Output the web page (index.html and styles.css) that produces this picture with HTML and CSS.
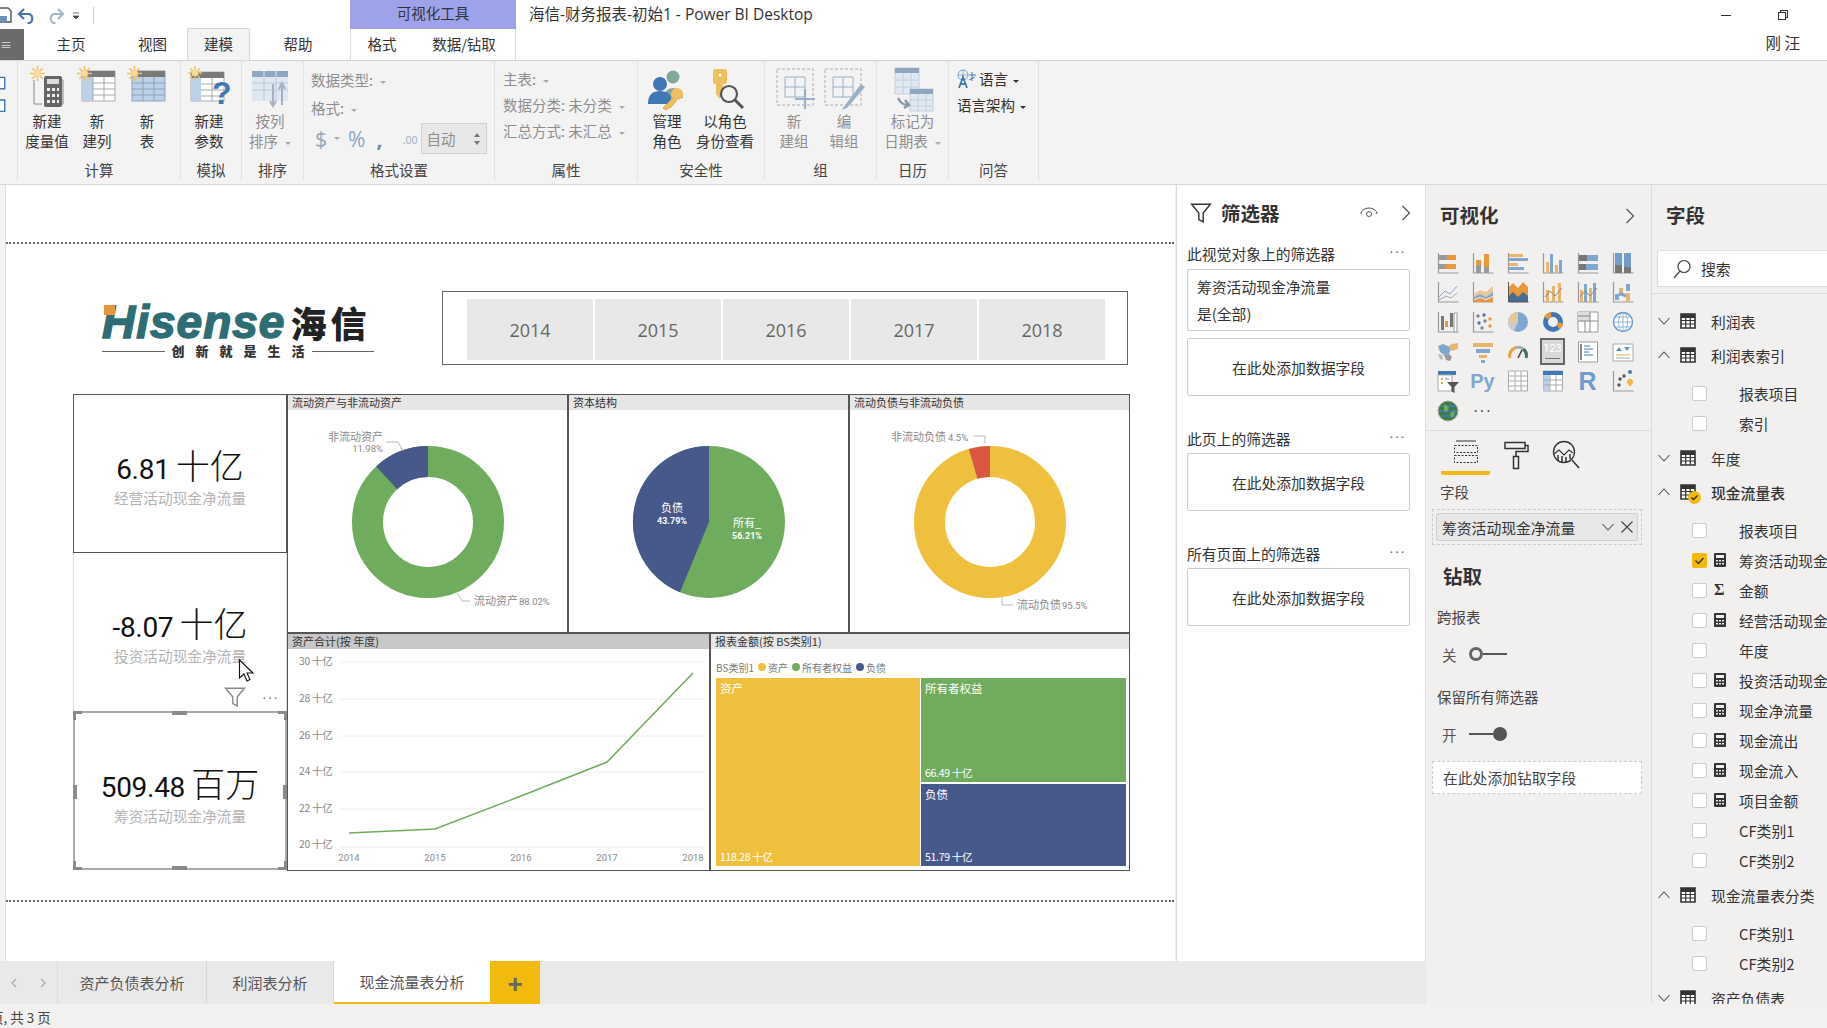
FILE: index.html
```html
<!DOCTYPE html>
<html lang="zh-CN">
<head>
    <meta charset="UTF-8">
    <meta name="viewport" content="width=device-width, initial-scale=1.0">
    <title>海信-财务报表-初始1 - Power BI Desktop</title>
    <link rel="stylesheet" href="styles.css">
</head>
<body>
    <svg class="defs" width="0" height="0">
        <symbol id="sun" viewBox="0 0 16 16">
            <g stroke="#f0c060" stroke-width="1.6">
                <path d="M8 0v16M0 8h16M2.5 2.5l11 11M13.5 2.5l-11 11"/>
            </g>
            <circle cx="8" cy="8" r="3.5" fill="#f7dca0"/>
        </symbol>
        <symbol id="tbl" viewBox="0 0 16 16">
            <path d="M1 1h14v14H1z" fill="#fff" stroke="#333" stroke-width="1.6"/>
            <path d="M1 1h14v4H1z" fill="#333"/>
            <path d="M1 7.5h14M1 11h14M5.7 4v11M10.3 4v11" stroke="#333" stroke-width="1.2"/>
        </symbol>
        <symbol id="calc" viewBox="0 0 12 14">
            <rect width="12" height="14" rx="1" fill="#333"/>
            <rect x="2" y="2" width="8" height="3" fill="#eee"/>
            <path d="M2 7h2v1.5H2zM5 7h2v1.5H5zM8 7h2v1.5H8zM2 10h2v1.5H2zM5 10h2v1.5H5zM8 10h2v1.5H8z" fill="#eee"/>
        </symbol>
        <symbol id="axis" viewBox="0 0 22 24">
            <path d="M1.5 2v20h20" fill="none" stroke="#9a9a9a" stroke-width="1.2"/>
        </symbol>
        <symbol id="chev-down" viewBox="0 0 14 14">
            <path d="M1.5 4l5.5 6 5.5-6" fill="none" stroke="#555" stroke-width="1.1"/>
        </symbol>
        <symbol id="chev-up" viewBox="0 0 14 14">
            <path d="M1.5 10l5.5-6 5.5 6" fill="none" stroke="#555" stroke-width="1.1"/>
        </symbol>
        <symbol id="funnel" viewBox="0 0 20 20">
            <path d="M1.5 2h17l-6.5 8v8l-4-2v-6z" fill="none" stroke="currentColor" stroke-width="1.3"/>
        </symbol>
    </svg>

    <div class="titlebar">
        <div class="qat">
            <svg class="qat-icon" width="94" height="20" viewBox="0 0 94 20">
                <path d="M-4 3h12l3 3v11H-4z" fill="#fff" stroke="#555" stroke-width="1.4"/>
                <path d="M-1 11h8v6h-8z" fill="#6a8fb8"/>
                <path d="M24 4l-5 5 5 5M19.5 9h10a5 5 0 0 1 0 9h-2" fill="none" stroke="#4a78ad" stroke-width="2.2"/>
                <path d="M58 4l5 5-5 5M62.5 9h-9a5 5 0 0 0 0 9h2" fill="none" stroke="#a8b8cc" stroke-width="2.2"/>
                <path d="M73 8h6M73 11h6l-3 3z" fill="#444" stroke="#444" stroke-width=".8"/>
                <path d="M93.5 2v17" stroke="#ccc"/>
            </svg>
        </div>
        <div class="tools-head">可视化工具</div>
        <div class="doc-title">海信-财务报表-初始1 - Power BI Desktop</div>
        <div class="win-controls">
            <svg width="12" height="12" viewBox="0 0 12 12"><path d="M1 6.5h10" stroke="#333"/></svg>
            <svg width="12" height="12" viewBox="0 0 12 12"><path d="M1.5 3.5h7v7h-7zM3.5 3.5v-2h7v7h-2" fill="none" stroke="#333" stroke-width="1.1"/></svg>
        </div>
    </div>

    <div class="tabs-row">
        <div class="file-tab">≡</div>
        <div class="rtab rtab-home">主页</div>
        <div class="rtab rtab-view">视图</div>
        <div class="rtab rtab-model active">建模</div>
        <div class="rtab rtab-help">帮助</div>
        <div class="tools-tabs">
            <div class="rtab rtab-format">格式</div>
            <div class="rtab rtab-data">数据/钻取</div>
        </div>
        <div class="user-name">刚 汪</div>
    </div>

    <div class="ribbon">
        <div class="rgroup g-clip">
            <div class="rgroup-body">
                <svg width="18" height="70" viewBox="0 0 18 70"><path d="M-6 10H5v12H-6zM-6 34H5v12H-6z" fill="#fff" stroke="#3f78b4" stroke-width="1.5"/></svg>
            </div>
        </div>
        <div class="rgroup g-calc">
            <div class="rgroup-body">
                <div class="rbtn w-58">
                    <svg width="40" height="46" viewBox="0 0 40 46">
                        <use href="#sun" x="3" y="0" width="15" height="15"/>
                        <path d="M7 14v24h8M30 14h6v24h-4" fill="none" stroke="#888"/>
                        <rect x="17" y="10" width="18" height="31" rx="2" fill="#666"/>
                        <rect x="20" y="13" width="12" height="5" fill="#ddd"/>
                        <path d="M20 22h3v3h-3zM25 22h3v3h-3zM30 22h2v3h-2zM20 28h3v3h-3zM25 28h3v3h-3zM30 28h2v3h-2zM20 34h3v3h-3zM25 34h3v3h-3zM30 34h2v3h-2z" fill="#eee"/>
                    </svg>
                    <span>新建<br>度量值</span>
                </div>
                <div class="rbtn w-42">
                    <svg width="40" height="46" viewBox="0 0 40 46">
                        <rect x="5" y="5" width="33" height="30" fill="#fff" stroke="#aaa"/>
                        <rect x="5" y="5" width="33" height="6" fill="#7a7a7a"/>
                        <rect x="5" y="11" width="11" height="24" fill="#bcd0e6"/>
                        <path d="M16 17h22M16 23h22M16 29h22M16 11v24M27 11v24" stroke="#aaa"/>
                        <use href="#sun" x="0" y="0" width="15" height="15"/>
                    </svg>
                    <span>新<br>建列</span>
                </div>
                <div class="rbtn w-58">
                    <svg width="40" height="46" viewBox="0 0 40 46">
                        <rect x="5" y="5" width="33" height="30" fill="#bcd0e6" stroke="#8ea3ba"/>
                        <rect x="5" y="5" width="33" height="6" fill="#7a7a7a"/>
                        <path d="M5 17h33M5 23h33M5 29h33M16 11v24M27 11v24" stroke="#8ea3ba"/>
                        <use href="#sun" x="0" y="0" width="15" height="15"/>
                    </svg>
                    <span>新<br>表</span>
                </div>
            </div>
            <div class="rgroup-label">计算</div>
        </div>
        <div class="rgroup g-sim">
            <div class="rgroup-body">
                <div class="rbtn w-56">
                    <svg width="42" height="46" viewBox="0 0 42 46">
                        <rect x="3" y="6" width="33" height="29" fill="#fff" stroke="#aaa"/>
                        <rect x="3" y="6" width="33" height="6" fill="#7a7a7a"/>
                        <rect x="3" y="12" width="10" height="23" fill="#bcd0e6"/>
                        <path d="M13 18h23M13 24h23M13 30h23M24 12v23" stroke="#aaa"/>
                        <use href="#sun" x="0" y="0" width="14" height="14"/>
                        <text x="24" y="38" class="qmark">?</text>
                    </svg>
                    <span>新建<br>参数</span>
                </div>
            </div>
            <div class="rgroup-label">模拟</div>
        </div>
        <div class="rgroup g-sort">
            <div class="rgroup-body">
                <div class="rbtn w-56 dim">
                    <svg width="42" height="46" viewBox="0 0 42 46">
                        <rect x="3" y="5" width="36" height="30" fill="#dfe8f1"/>
                        <rect x="3" y="5" width="36" height="6" fill="#8fa7be"/>
                        <path d="M3 17h36M3 24h36M15 5v30M27 5v30" stroke="#c9d4df" stroke-width="1.5"/>
                        <path d="M24 18v21M21 35l3 5 3-5M33 39V18M30 23l3-6 3 6" fill="none" stroke="#a2b2c2" stroke-width="2"/>
                    </svg>
                    <span>按列<br>排序<i class="caret-dim"></i></span>
                </div>
            </div>
            <div class="rgroup-label">排序</div>
        </div>
        <div class="rgroup g-format">
            <div class="rgroup-body col-body">
                <div class="rline dim">数据类型:<i class="caret-dim"></i></div>
                <div class="rline dim">格式:<i class="caret-dim"></i></div>
                <div class="fmt-row">
                    <span class="fmt-sym fmt-dollar">$</span><i class="caret-dim"></i>
                    <span class="fmt-sym fmt-pct">%</span>
                    <span class="fmt-sym fmt-comma">,</span>
                    <span class="fmt-dec">.00</span>
                    <span class="fmt-box">自动<svg width="8" height="16" viewBox="0 0 8 16"><path d="M1 6l3-4 3 4zM1 10l3 4 3-4z" fill="#777"/></svg></span>
                </div>
            </div>
            <div class="rgroup-label">格式设置</div>
        </div>
        <div class="rgroup g-props">
            <div class="rgroup-body col-body short-rows">
                <div class="rline dim">主表:<i class="caret-dim"></i></div>
                <div class="rline dim">数据分类: 未分类<i class="caret-dim"></i></div>
                <div class="rline dim">汇总方式: 未汇总<i class="caret-dim"></i></div>
            </div>
            <div class="rgroup-label">属性</div>
        </div>
        <div class="rgroup g-sec">
            <div class="rgroup-body">
                <div class="rbtn w-58">
                    <svg width="44" height="46" viewBox="0 0 44 46">
                        <circle cx="28" cy="11" r="6.5" fill="#7fa99b"/>
                        <path d="M18 32a10 10 0 0 1 20 0z" fill="#7fa99b"/>
                        <circle cx="15" cy="18" r="7" fill="#3f78b4"/>
                        <path d="M3 38c0-10 5-13 12-13s12 3 12 13z" fill="#3f78b4"/>
                        <circle cx="32" cy="28" r="6" fill="#efc060"/>
                        <path d="M28 32l-10 10 3 2 3-2 2-1 6-7" fill="#efc060" stroke="#d9a845"/>
                    </svg>
                    <span>管理<br>角色</span>
                </div>
                <div class="rbtn w-58">
                    <svg width="44" height="46" viewBox="0 0 44 46">
                        <rect x="10" y="3" width="14" height="15" rx="2" fill="#efc060"/>
                        <path d="M13 18h7v10l-3.5 5-3.5-5z" fill="#efc060"/>
                        <circle cx="17" cy="9" r="1.5" fill="#fff"/>
                        <circle cx="26" cy="28" r="8" fill="#f3f3f3" stroke="#555" stroke-width="2.2"/>
                        <path d="M32 34l8 8" stroke="#555" stroke-width="3"/>
                    </svg>
                    <span>以角色<br>身份查看</span>
                </div>
            </div>
            <div class="rgroup-label">安全性</div>
        </div>
        <div class="rgroup g-grp">
            <div class="rgroup-body">
                <div class="rbtn w-58 dim">
                    <svg width="42" height="46" viewBox="0 0 42 46">
                        <rect x="4" y="3" width="36" height="36" fill="none" stroke="#aaa" stroke-dasharray="3 2"/>
                        <path d="M12 11h20v20H12zM22 11v20M12 21h20" fill="none" stroke="#9ab0c6"/>
                        <path d="M32 23v20M22 33h20" stroke="#9ab0c6" stroke-width="2.2"/>
                    </svg>
                    <span>新<br>建组</span>
                </div>
                <div class="rbtn w-42 dim">
                    <svg width="42" height="46" viewBox="0 0 42 46">
                        <rect x="2" y="3" width="36" height="36" fill="none" stroke="#aaa" stroke-dasharray="3 2"/>
                        <path d="M10 11h20v20H10zM20 11v20M10 21h20" fill="none" stroke="#9ab0c6"/>
                        <path d="M20 42l18-24 4 3-18 21-5 2z" fill="#9ab0c6"/>
                    </svg>
                    <span>编<br>辑组</span>
                </div>
            </div>
            <div class="rgroup-label">组</div>
        </div>
        <div class="rgroup g-cal">
            <div class="rgroup-body">
                <div class="rbtn w-72 dim">
                    <svg width="44" height="46" viewBox="0 0 44 46">
                        <rect x="4" y="2" width="24" height="26" fill="#e0e8f1" stroke="#c4d0dc"/>
                        <rect x="4" y="2" width="24" height="5" fill="#8fa7be"/>
                        <path d="M4 14h24M4 21h24M12 7v21M20 7v21" stroke="#c4d0dc"/>
                        <rect x="19" y="23" width="23" height="22" fill="#e0e8f1" stroke="#c4d0dc"/>
                        <rect x="19" y="23" width="23" height="5" fill="#8fa7be"/>
                        <path d="M19 34h23M19 40h23M27 28v17M35 28v17" stroke="#c4d0dc"/>
                        <path d="M7 32c3 6 6 7 10 7M14 34l4 5-5 3" fill="none" stroke="#8a99a8" stroke-width="2.5"/>
                    </svg>
                    <span>标记为<br>日期表<i class="caret-dim"></i></span>
                </div>
            </div>
            <div class="rgroup-label">日历</div>
        </div>
        <div class="rgroup g-qa">
            <div class="rgroup-body col-body short-rows">
                <div class="rline lang-line">
                    <svg width="20" height="20" viewBox="0 0 20 20">
                        <circle cx="6" cy="6" r="5" fill="none" stroke="#7a9ccc"/>
                        <path d="M1 6h10M6 1v10" stroke="#7a9ccc" stroke-width=".7"/>
                        <path d="M2 19L6 8l4 11M3.5 15h5" fill="none" stroke="#3f78b4" stroke-width="1.8"/>
                        <path d="M12 6h7M15 3v9M12 11l6-3" fill="none" stroke="#3f78b4"/>
                    </svg>
                    <span>语言<i class="caret"></i></span>
                </div>
                <div class="rline">语言架构<i class="caret"></i></div>
            </div>
            <div class="rgroup-label">问答</div>
        </div>
    </div>

    <div class="main">
        <div class="work">
            <div class="work-top">
                <div class="canvas-wrap">
                    <div class="canvas">
                        <div class="page-line page-line-top"></div>
                        <div class="page-line page-line-bottom"></div>

                        <div class="logo">
                            <div class="logo-top">
                                <i class="logo-dot"></i>
                                <span class="logo-en">Hisense</span>
                                <span class="logo-cn">海信</span>
                            </div>
                            <div class="logo-slogan"><i></i><span>创新就是生活</span><i></i></div>
                        </div>

                        <div class="slicer">
                            <div class="year">2014</div>
                            <div class="year">2015</div>
                            <div class="year">2016</div>
                            <div class="year">2017</div>
                            <div class="year">2018</div>
                        </div>

                        <div class="kpi kpi-1">
                            <div class="kpi-value"><span class="num">6.81</span> <span class="unit">十亿</span></div>
                            <div class="kpi-label">经营活动现金净流量</div>
                        </div>
                        <div class="kpi kpi-2">
                            <div class="kpi-value"><span class="num">-8.07</span> <span class="unit">十亿</span></div>
                            <div class="kpi-label">投资活动现金净流量</div>
                            <div class="kpi-tools">
                                <svg class="kpi-funnel" width="22" height="22"><use href="#funnel"/></svg>
                                <span class="dots">···</span>
                            </div>
                        </div>
                        <div class="kpi kpi-3">
                            <div class="kpi-value"><span class="num">509.48</span> <span class="unit">百万</span></div>
                            <div class="kpi-label">筹资活动现金净流量</div>
                            <i class="h h-tl"></i><i class="h h-tr"></i><i class="h h-bl"></i><i class="h h-br"></i>
                            <i class="h h-tm"></i><i class="h h-bm"></i><i class="h h-lm"></i><i class="h h-rm"></i>
                        </div>

                        <div class="vis vis-a">
                            <div class="vis-head">流动资产与非流动资产</div>
                            <svg class="vis-svg" width="279" height="221" viewBox="0 0 279 221">
                                <circle cx="140" cy="112" r="60.5" fill="none" stroke="#6fac5e" stroke-width="31"/>
                                <path d="M140 36A76 76 0 0 0 88.1 56.5L109.2 79.2A45 45 0 0 1 140 67z" fill="#47598b"/>
                                <path d="M98 32h12l5 9M169 183l5 8h8" class="leader"/>
                                <text x="95" y="31" class="lbl end">非流动资产</text>
                                <text x="95" y="42" class="lbl-num end">11.98%</text>
                                <text x="186" y="195" class="lbl">流动资产</text>
                                <text x="231" y="195" class="lbl-num">88.02%</text>
                            </svg>
                        </div>
                        <div class="vis vis-b">
                            <div class="vis-head">资本结构</div>
                            <svg class="vis-svg" width="279" height="221" viewBox="0 0 279 221">
                                <circle cx="140" cy="112" r="76" fill="#6fac5e"/>
                                <path d="M140 36A76 76 0 0 0 111 182.3L140 112z" fill="#47598b"/>
                                <text x="103" y="102" class="lbl-in">负债</text>
                                <text x="103" y="114" class="lbl-in num-in">43.79%</text>
                                <text x="178" y="117" class="lbl-in">所有_</text>
                                <text x="178" y="129" class="lbl-in num-in">56.21%</text>
                            </svg>
                        </div>
                        <div class="vis vis-c">
                            <div class="vis-head">流动负债与非流动负债</div>
                            <svg class="vis-svg" width="279" height="221" viewBox="0 0 279 221">
                                <circle cx="140" cy="112" r="60.5" fill="none" stroke="#efc03d" stroke-width="31"/>
                                <path d="M140 36A76 76 0 0 0 118.8 39L127.4 68.8A45 45 0 0 1 140 67z" fill="#d9583f"/>
                                <path d="M123 26h12v8M152 186v9h11" class="leader"/>
                                <text x="41" y="31" class="lbl">非流动负债</text>
                                <text x="98" y="31" class="lbl-num">4.5%</text>
                                <text x="167" y="199" class="lbl">流动负债</text>
                                <text x="212" y="199" class="lbl-num">95.5%</text>
                            </svg>
                        </div>
                        <div class="vis vis-d">
                            <div class="vis-head dark">资产合计(按 年度)</div>
                            <svg class="vis-svg" width="421" height="221" viewBox="0 0 421 221">
                                <path d="M52 13h364M52 50h364M52 87h364M52 123h364M52 160h364M52 198h364" stroke="#eee"/>
                                <text x="11" y="16" class="axis-y">30 十亿</text>
                                <text x="11" y="53" class="axis-y">28 十亿</text>
                                <text x="11" y="90" class="axis-y">26 十亿</text>
                                <text x="11" y="126" class="axis-y">24 十亿</text>
                                <text x="11" y="163" class="axis-y">22 十亿</text>
                                <text x="11" y="199" class="axis-y">20 十亿</text>
                                <polyline points="61,184 147,180 233,147 319,113 405,24" fill="none" stroke="#6fac5e" stroke-width="1.5"/>
                                <text x="61" y="212" class="axis-x">2014</text>
                                <text x="147" y="212" class="axis-x">2015</text>
                                <text x="233" y="212" class="axis-x">2016</text>
                                <text x="319" y="212" class="axis-x">2017</text>
                                <text x="405" y="212" class="axis-x">2018</text>
                            </svg>
                        </div>
                        <div class="vis vis-e">
                            <div class="vis-head">报表金额(按 BS类别1)</div>
                            <div class="legend">
                                <span>BS类别1</span>
                                <span class="leg"><i class="dot dot-y"></i>资产</span>
                                <span class="leg"><i class="dot dot-g"></i>所有者权益</span>
                                <span class="leg"><i class="dot dot-b"></i>负债</span>
                            </div>
                            <div class="treemap">
                                <div class="cell cell-y"><span>资产</span><span class="cell-num">118.28 十亿</span></div>
                                <div class="tree-right">
                                    <div class="cell cell-g"><span>所有者权益</span><span class="cell-num">66.49 十亿</span></div>
                                    <div class="cell cell-b"><span>负债</span><span class="cell-num">51.79 十亿</span></div>
                                </div>
                            </div>
                        </div>

                        <svg class="cursor" width="18" height="24" viewBox="0 0 18 24">
                            <path d="M1.5 1v18l4.5-4 3 7 3-1.5-3-6.5h6z" fill="#fff" stroke="#111" stroke-width="1.1"/>
                        </svg>
                    </div>
                </div>

                <div class="filter-pane">
                    <div class="filter-head">
                        <svg class="filter-funnel" width="22" height="22"><use href="#funnel"/></svg>
                        <span class="pane-title">筛选器</span>
                        <svg class="eye" width="18" height="14" viewBox="0 0 18 14">
                            <path d="M1 8a8 6 0 0 1 16 0" fill="none" stroke="#555"/>
                            <circle cx="9" cy="8" r="2.5" fill="none" stroke="#555"/>
                        </svg>
                        <svg class="pane-chev" width="10" height="16" viewBox="0 0 10 16"><path d="M1.5 1l7 7-7 7" fill="none" stroke="#555" stroke-width="1.2"/></svg>
                    </div>
                    <div class="filter-label first"><span>此视觉对象上的筛选器</span><b class="dots">···</b></div>
                    <div class="filter-card">
                        <div>筹资活动现金净流量</div>
                        <div>是(全部)</div>
                    </div>
                    <div class="filter-drop tall">在此处添加数据字段</div>
                    <div class="filter-label"><span>此页上的筛选器</span><b class="dots">···</b></div>
                    <div class="filter-drop">在此处添加数据字段</div>
                    <div class="filter-label"><span>所有页面上的筛选器</span><b class="dots">···</b></div>
                    <div class="filter-drop">在此处添加数据字段</div>
                </div>
            </div>

            <div class="sheet-tabs">
                <div class="sheet-nav">
                    <svg width="8" height="12" viewBox="0 0 8 12"><path d="M6 2L2 6l4 4" fill="none" stroke="#aaa" stroke-width="1.2"/></svg>
                    <svg width="8" height="12" viewBox="0 0 8 12"><path d="M2 2l4 4-4 4" fill="none" stroke="#aaa" stroke-width="1.2"/></svg>
                </div>
                <div class="sheet sheet-1">资产负债表分析</div>
                <div class="sheet sheet-2">利润表分析</div>
                <div class="sheet sheet-3 active">现金流量表分析</div>
                <div class="sheet-add">+</div>
            </div>
        </div>

        <div class="viz-pane">
            <div class="side-head">
                <span class="pane-title">可视化</span>
                <svg class="pane-chev" width="10" height="16" viewBox="0 0 10 16"><path d="M1.5 1l7 7-7 7" fill="none" stroke="#555" stroke-width="1.2"/></svg>
            </div>
            <div class="viz-grid">
                <!-- row 1 -->
                <svg class="vi" viewBox="0 0 22 24"><use href="#axis" width="22" height="24"/><path d="M2 4h8v5H2zM2 13h6v5H2z" fill="#999"/><path d="M10 4h9v5h-9zM8 13h11v5H8z" fill="#e8973a"/></svg>
                <svg class="vi" viewBox="0 0 22 24"><use href="#axis" width="22" height="24"/><path d="M4 14h5v8H4zM12 16h5v6h-5z" fill="#999"/><path d="M4 9h5v5H4zM12 3h5v13h-5z" fill="#e8973a"/></svg>
                <svg class="vi" viewBox="0 0 22 24"><use href="#axis" width="22" height="24"/><path d="M2 3h14v3H2zM2 12h9v3H2z" fill="#e8b56a"/><path d="M2 7h19v3H2zM2 16h15v3H2z" fill="#7fa7d1"/></svg>
                <svg class="vi" viewBox="0 0 22 24"><use href="#axis" width="22" height="24"/><path d="M4 11h3v11H4zM13 14h3v8h-3z" fill="#e8b56a"/><path d="M8 3h3v19H8zM17 9h3v13h-3z" fill="#7fa7d1"/></svg>
                <svg class="vi" viewBox="0 0 22 24"><use href="#axis" width="22" height="24"/><path d="M2 4h8v6H2zM2 13h7v6H2z" fill="#777"/><path d="M10 4h11v6H10zM9 13h12v6H9z" fill="#7fa7d1"/></svg>
                <svg class="vi" viewBox="0 0 22 24"><use href="#axis" width="22" height="24"/><path d="M3 14h7v8H3zM12 16h7v6h-7z" fill="#777"/><path d="M3 2h7v12H3zM12 2h7v14h-7z" fill="#6f9ccb"/></svg>
                <!-- row 2 -->
                <svg class="vi" viewBox="0 0 22 24"><use href="#axis" width="22" height="24"/><path d="M2 17l6-6 5 3 7-8" fill="none" stroke="#8aa8c8"/><path d="M2 20l7-4 5 2 6-5" fill="none" stroke="#aaa"/></svg>
                <svg class="vi" viewBox="0 0 22 24"><use href="#axis" width="22" height="24"/><path d="M2 14l6-4 6 2 7-6v6l-7 5-6-3-6 3z" fill="#e8c89a"/><path d="M2 17l6-3 6 3 7-5v4l-7 3-6-2-6 2z" fill="#8aa8c8"/><path d="M2 20l6-2 6 2 7-3v5H2z" fill="#e8973a"/></svg>
                <svg class="vi" viewBox="0 0 22 24"><path d="M1 22V8l5-5 5 5 5-6 5 5v15z" fill="#e8973a"/><path d="M1 17l5-5 5 5 5-5 5 4v6H1z" fill="#4a6c94"/><path d="M1.5 2v20h20" fill="none" stroke="#555"/></svg>
                <svg class="vi" viewBox="0 0 22 24"><use href="#axis" width="22" height="24"/><path d="M4 10h3v12H4zM10 6h3v16h-3zM16 3h3v19h-3z" fill="#e8b56a"/><path d="M3 17l5-6 5 5 7-8" fill="none" stroke="#888"/></svg>
                <svg class="vi" viewBox="0 0 22 24"><use href="#axis" width="22" height="24"/><path d="M3 10h3v12H3zM12 8h3v14h-3z" fill="#e8b56a"/><path d="M7 4h3v18H7zM16 3h3v19h-3z" fill="#7fa7d1"/><path d="M3 17l5-6 5 5 7-8" fill="none" stroke="#888"/></svg>
                <svg class="vi" viewBox="0 0 22 24"><use href="#axis" width="22" height="24"/><path d="M3 14h4v6H3zM14 4h4v7h-4z" fill="#7fa7d1"/><path d="M7 8h4v8H7zM14 13h4v8h-4z" fill="#e8b56a"/><path d="M7 13l7 3" stroke="#7fa7d1" stroke-width="3"/></svg>
                <!-- row 3 -->
                <svg class="vi" viewBox="0 0 22 24"><use href="#axis" width="22" height="24"/><path d="M4 6h3v14H4zM13 3h3v14h-3z" fill="#777"/><path d="M8 11h3v6H8z" fill="#e8973a"/><path d="M17 3h3v19h-3z" fill="#fff" stroke="#999"/></svg>
                <svg class="vi" viewBox="0 0 22 24"><use href="#axis" width="22" height="24"/><circle cx="6" cy="6" r="1.7" fill="#888"/><circle cx="12" cy="5" r="1.7" fill="#4a78ad"/><circle cx="18" cy="9" r="1.7" fill="#e8973a"/><circle cx="7" cy="13" r="1.7" fill="#4a78ad"/><circle cx="13" cy="11" r="1.7" fill="#888"/><circle cx="18" cy="16" r="1.7" fill="#e8973a"/><circle cx="10" cy="18" r="1.7" fill="#888"/></svg>
                <svg class="vi" viewBox="0 0 22 24"><circle cx="11" cy="12" r="10" fill="#7fa7d1"/><path d="M11 12V2A10 10 0 0 0 1 12z" fill="#e8c89a"/><path d="M11 12H1a10 10 0 0 0 6 9z" fill="#ccc"/></svg>
                <svg class="vi" viewBox="0 0 22 24"><circle cx="11" cy="12" r="7.5" fill="none" stroke="#3f78b4" stroke-width="5"/><path d="M4 8a8 8 0 0 1 5-3.5M16 17a8 8 0 0 0 3-4" fill="none" stroke="#e8973a" stroke-width="5"/></svg>
                <svg class="vi" viewBox="0 0 22 24"><path d="M1 2h20v20H1z" fill="#fff" stroke="#999"/><path d="M1 2h12v9H1z" fill="#ddd"/><path d="M13 2v20M1 11h20M1 6h12M8 11v11" stroke="#888" fill="none"/></svg>
                <svg class="vi" viewBox="0 0 22 24"><circle cx="11" cy="12" r="9.5" fill="#fff" stroke="#5f92c8" stroke-width="1.3"/><path d="M1.5 12h19M3 7h16M3 17h16M11 2.5v19" stroke="#7fa7d1" stroke-width=".8" fill="none"/><ellipse cx="11" cy="12" rx="4.5" ry="9.5" fill="none" stroke="#7fa7d1" stroke-width=".8"/></svg>
                <!-- row 4 -->
                <svg class="vi" viewBox="0 0 22 24"><path d="M1 6l5-2 5 2 3 3-2 5-5 1-4-3z" fill="#7fa7d1"/><path d="M7 15l5-1 3 3-2 4-4-1z" fill="#999"/><path d="M11 6l4-2 6-1v6l-6 2z" fill="#e8b56a"/><path d="M1 14l4 1 1 5-3-1z" fill="#bbb"/></svg>
                <svg class="vi" viewBox="0 0 22 24"><path d="M1 3h20v4H1z" fill="#e8b56a"/><path d="M4 9h14v4H4z" fill="#7fa7d1"/><path d="M7 15h8v3H7z" fill="#e8b56a"/><path d="M9 20h4v3H9z" fill="#7fa7d1"/></svg>
                <svg class="vi" viewBox="0 0 22 24"><path d="M3 18a8 8 0 0 1 5-10" fill="none" stroke="#e8a33d" stroke-width="3"/><path d="M8 8a8 8 0 0 1 8 1" fill="none" stroke="#aaa" stroke-width="3"/><path d="M16 9a8 8 0 0 1 3 9" fill="none" stroke="#3f6f6a" stroke-width="3"/><path d="M11 18l4-8" stroke="#444" stroke-width="1.5"/></svg>
                <div class="vi-card"><span>123</span><i></i></div>
                <svg class="vi" viewBox="0 0 22 24"><path d="M1.5 2h19v20h-19z" fill="#fff" stroke="#999"/><path d="M4 4v16" stroke="#888" stroke-width="2"/><path d="M7 6h6M7 9h9M7 12h5M7 15h9" stroke="#7fa7d1" stroke-width="1.5"/></svg>
                <svg class="vi" viewBox="0 0 22 24"><path d="M1 4h20v17H1z" fill="#fff" stroke="#aaa"/><path d="M4 11l3-4 3 4zM12 7h6l-3 4z" fill="#5f92c8"/><path d="M4 15h14" stroke="#e8a33d"/><path d="M4 18h14" stroke="#aaa"/></svg>
                <!-- row 5 -->
                <svg class="vi" viewBox="0 0 22 24"><path d="M1 2h18v4H1z" fill="#3f78b4"/><path d="M1 6h14v16H1z" fill="#fff" stroke="#aaa"/><path d="M4 9h2v2H4zM4 13h2v2H4z" fill="#e8a33d"/><path d="M8 10h4" stroke="#888"/><path d="M10 13h12l-4.5 5v6l-3-1.5V18z" fill="#555"/></svg>
                <div class="vi-text vi-py">Py</div>
                <svg class="vi" viewBox="0 0 22 24"><path d="M1.5 2h19v20h-19zM1.5 7h19M1.5 12h19M1.5 17h19M8 2v20M14 2v20" fill="#fff" stroke="#aaa"/></svg>
                <svg class="vi" viewBox="0 0 22 24"><path d="M1.5 2h19v20h-19z" fill="#fff" stroke="#aaa"/><path d="M1 2h20v4H1z" fill="#3f78b4"/><path d="M1.5 6h6v16h-6z" fill="#bcd0e6"/><path d="M1.5 11h19M1.5 16h19M8 6v16M14 6v16" stroke="#aaa"/></svg>
                <div class="vi-text vi-r">R</div>
                <svg class="vi" viewBox="0 0 22 24"><use href="#axis" width="22" height="24"/><circle cx="7" cy="16" r="1.7" fill="#555"/><circle cx="8" cy="10" r="1.7" fill="#555"/><circle cx="12" cy="7" r="1.7" fill="#555"/><circle cx="18" cy="3" r="2" fill="#4a78ad"/><path d="M16 15a3 3 0 1 1 4 0l-1 2h-2z" fill="#efb94a"/></svg>
                <!-- row 6 -->
                <svg class="vi" viewBox="0 0 22 24"><circle cx="11" cy="12" r="10" fill="#3f7d3f" stroke="#aaa"/><path d="M2 12h18M4 7h14M4 17h14" stroke="#3f78b4" stroke-width="2"/><path d="M7 5l5 3-2 5-3-1zM13 14l5-2-1 5-3 2z" fill="#6fac5e"/></svg>
                <div class="vi-more dots">···</div>
            </div>
            <div class="viz-tabs">
                <div class="viz-tab on">
                    <svg width="28" height="26" viewBox="0 0 28 26"><path d="M4 1h20" stroke="#333"/><path d="M2.5 5.5h23v7h-23zM2.5 15.5h23v7h-23z" fill="none" stroke="#333" stroke-dasharray="2 1.5"/></svg>
                </div>
                <div class="viz-tab">
                    <svg width="26" height="30" viewBox="0 0 26 30"><path d="M2 2.5h20v6H2z" fill="none" stroke="#333" stroke-width="1.5"/><path d="M22 5.5h3v6H13v5" fill="none" stroke="#333" stroke-width="1.5"/><path d="M10.5 16.5h5v12h-5z" fill="none" stroke="#333" stroke-width="1.5"/></svg>
                </div>
                <div class="viz-tab">
                    <svg width="28" height="30" viewBox="0 0 28 30"><circle cx="12" cy="12" r="10.5" fill="none" stroke="#333" stroke-width="1.3"/><path d="M2 14l5-4 5 5 5-5 4 3" fill="none" stroke="#333" stroke-width="1.1"/><path d="M6 20v-5M10 22v-6M14 22v-5M18 19v-5" stroke="#333" stroke-width="1.5"/><path d="M20 20l7 8" stroke="#333" stroke-width="1.5"/></svg>
                </div>
            </div>
            <div class="viz-body">
                <div class="viz-label well-label">字段</div>
                <div class="well">
                    <div class="well-pill">
                        <span>筹资活动现金净流量</span>
                        <svg width="14" height="14"><use href="#chev-down"/></svg>
                        <svg class="well-x" width="14" height="14" viewBox="0 0 14 14"><path d="M1.5 1.5l11 11M12.5 1.5l-11 11" stroke="#444" stroke-width="1.1"/></svg>
                    </div>
                </div>
                <div class="pane-title drill-title">钻取</div>
                <div class="viz-label cross-label">跨报表</div>
                <div class="toggle-row">
                    <span>关</span>
                    <i class="knob-off"></i><i class="toggle-line"></i>
                </div>
                <div class="viz-label keep-label">保留所有筛选器</div>
                <div class="toggle-row">
                    <span>开</span>
                    <i class="toggle-line"></i><i class="knob-on"></i>
                </div>
                <div class="drill-drop">在此处添加钻取字段</div>
            </div>
        </div>

        <div class="fields-pane">
            <div class="side-head fields-head"><span class="pane-title">字段</span></div>
            <div class="search">
                <svg width="22" height="22" viewBox="0 0 22 22"><circle cx="13" cy="8.5" r="6" fill="none" stroke="#444" stroke-width="1.2"/><path d="M9 13l-6 7" stroke="#444" stroke-width="1.3"/></svg>
                <span>搜索</span>
            </div>
            <div class="tree">
                <div class="t-row"><svg width="14" height="14"><use href="#chev-down"/></svg><svg class="t-icon" width="16" height="16"><use href="#tbl"/></svg><span>利润表</span></div>
                <div class="t-row"><svg width="14" height="14"><use href="#chev-up"/></svg><svg class="t-icon" width="16" height="16"><use href="#tbl"/></svg><span>利润表索引</span></div>
                <div class="t-fields">
                    <div class="f-row"><i class="cb"></i><i class="f-type"></i><span>报表项目</span></div>
                    <div class="f-row"><i class="cb"></i><i class="f-type"></i><span>索引</span></div>
                </div>
                <div class="t-row"><svg width="14" height="14"><use href="#chev-down"/></svg><svg class="t-icon" width="16" height="16"><use href="#tbl"/></svg><span>年度</span></div>
                <div class="t-row">
                    <svg width="14" height="14"><use href="#chev-up"/></svg>
                    <span class="t-badge">
                        <svg class="t-icon" width="16" height="16"><use href="#tbl"/></svg>
                        <svg class="badge" width="13" height="13" viewBox="0 0 13 13"><circle cx="6.5" cy="6.5" r="6.5" fill="#f2b90f"/><path d="M3.5 6.5l2 2 4-4" fill="none" stroke="#333" stroke-width="1.4"/></svg>
                    </span>
                    <span class="t-strong">现金流量表</span>
                </div>
                <div class="t-fields">
                    <div class="f-row"><i class="cb"></i><i class="f-type"></i><span>报表项目</span></div>
                    <div class="f-row"><svg class="cb-on" width="15" height="15" viewBox="0 0 15 15"><rect width="15" height="15" rx="2" fill="#f2b90f"/><path d="M3.5 7.5l3 3 5-5.5" fill="none" stroke="#333" stroke-width="1.3"/></svg><svg class="f-type" width="12" height="14"><use href="#calc"/></svg><span>筹资活动现金净流量</span></div>
                    <div class="f-row"><i class="cb"></i><span class="f-type f-sigma">Σ</span><span>金额</span></div>
                    <div class="f-row"><i class="cb"></i><svg class="f-type" width="12" height="14"><use href="#calc"/></svg><span>经营活动现金净流量</span></div>
                    <div class="f-row"><i class="cb"></i><i class="f-type"></i><span>年度</span></div>
                    <div class="f-row"><i class="cb"></i><svg class="f-type" width="12" height="14"><use href="#calc"/></svg><span>投资活动现金净流量</span></div>
                    <div class="f-row"><i class="cb"></i><svg class="f-type" width="12" height="14"><use href="#calc"/></svg><span>现金净流量</span></div>
                    <div class="f-row"><i class="cb"></i><svg class="f-type" width="12" height="14"><use href="#calc"/></svg><span>现金流出</span></div>
                    <div class="f-row"><i class="cb"></i><svg class="f-type" width="12" height="14"><use href="#calc"/></svg><span>现金流入</span></div>
                    <div class="f-row"><i class="cb"></i><svg class="f-type" width="12" height="14"><use href="#calc"/></svg><span>项目金额</span></div>
                    <div class="f-row"><i class="cb"></i><i class="f-type"></i><span>CF类别1</span></div>
                    <div class="f-row"><i class="cb"></i><i class="f-type"></i><span>CF类别2</span></div>
                </div>
                <div class="t-row"><svg width="14" height="14"><use href="#chev-up"/></svg><svg class="t-icon" width="16" height="16"><use href="#tbl"/></svg><span>现金流量表分类</span></div>
                <div class="t-fields">
                    <div class="f-row"><i class="cb"></i><i class="f-type"></i><span>CF类别1</span></div>
                    <div class="f-row"><i class="cb"></i><i class="f-type"></i><span>CF类别2</span></div>
                </div>
                <div class="t-row"><svg width="14" height="14"><use href="#chev-down"/></svg><svg class="t-icon" width="16" height="16"><use href="#tbl"/></svg><span>资产负债表</span></div>
            </div>
        </div>
    </div>

    <div class="statusbar">页, 共 3 页</div>
</body>
</html>
```

FILE: styles.css
```css
* {
    box-sizing: border-box;
}

html, body {
    margin: 0;
    padding: 0;
    height: 100%;
}

body {
    width: 1827px;
    height: 1028px;
    overflow: hidden;
    background-color: #fff;
    color: #333;
    font-family: "Noto Sans CJK SC", "Open Sans", sans-serif;
    font-size: 14.5px;
    display: flex;
    flex-direction: column;
}

i {
    font-style: normal;
}

.defs {
    position: absolute;
}

.dots {
    font-family: "Liberation Sans", sans-serif;
    letter-spacing: 1px;
}

/* title bar */
.titlebar {
    height: 29px;
    flex: none;
    display: flex;
    align-items: stretch;
}

.qat {
    width: 350px;
    display: flex;
    align-items: center;
}

.tools-head {
    width: 166px;
    background-color: #9ea2ea;
    color: #333;
    text-align: center;
    line-height: 26px;
}

.doc-title {
    padding-left: 13px;
    line-height: 29px;
    font-size: 15.5px;
    font-family: "Open Sans", "Noto Sans CJK SC", sans-serif;
}

.win-controls {
    margin-left: auto;
    width: 107px;
    padding-right: 38px;
    display: flex;
    justify-content: space-between;
    align-items: center;
}

.tabs-row {
    height: 32px;
    flex: none;
    display: flex;
    align-items: stretch;
    background-color: #fff;
    border-bottom: 1px solid #d8d8d8;
}

.file-tab {
    width: 24px;
    height: 31px;
    background-color: #6b6b6b;
    color: #ddd;
    font-size: 12px;
    line-height: 31px;
    text-align: left;
}

.rtab {
    text-align: center;
    line-height: 29px;
}

.rtab.active {
    background-color: #f3f3f3;
    border: 1px solid #d8d8d8;
    border-bottom: none;
    height: 32px;
    margin-top: -1px;
    line-height: 29px;
}

.rtab-home { width: 94px; }
.rtab-view { width: 69px; }
.rtab-model { width: 63px; }
.rtab-help { width: 96px; margin-right: 4px; }
.rtab-format { width: 62px; }
.rtab-data { width: 102px; }

.tools-tabs {
    display: flex;
    border-left: 1px solid #dcdcdc;
    border-right: 1px solid #dcdcdc;
}

.user-name {
    margin-left: auto;
    padding-right: 27px;
    line-height: 27px;
    font-size: 15.5px;
}

/* ribbon */
.ribbon {
    height: 124px;
    flex: none;
    display: flex;
    background-color: #f3f3f3;
    border-bottom: 1px solid #d8d8d8;
}

.rgroup {
    display: flex;
    flex-direction: column;
    padding-top: 5px;
    border-right: 1px solid #e3e3e3;
    margin-bottom: 3px;
}

.rgroup-body {
    height: 94px;
    display: flex;
    line-height: 20px;
}

.rgroup-label {
    text-align: center;
    line-height: 22px;
    color: #444;
}

.g-clip { width: 18px; }
.g-calc { width: 163px; }
.g-sim { width: 61px; }
.g-sort { width: 62px; }
.g-format { width: 191px; }
.g-props { width: 143px; }
.g-sec { width: 127px; }
.g-grp { width: 112px; }
.g-cal { width: 72px; }
.g-qa { width: 90px; }

.rbtn {
    display: flex;
    flex-direction: column;
    align-items: center;
    text-align: center;
}

.rbtn svg {
    margin-bottom: -1px;
    height: 46px;
    overflow: visible;
}

.rbtn span {
    white-space: nowrap;
}

.w-42 { width: 42px; }
.w-56 { width: 56px; }
.w-58 { width: 58px; }
.w-72 { width: 72px; }

.dim {
    color: #8e8e8e;
}

.qmark {
    font-family: "Liberation Sans", sans-serif;
    font-weight: bold;
    font-size: 32px;
    fill: #3f78b4;
}

.caret-dim {
    display: inline-block;
    width: 0;
    height: 0;
    margin-left: 7px;
    vertical-align: middle;
    border-left: 3px solid transparent;
    border-right: 3px solid transparent;
    border-top: 3px solid #aaa;
}

.caret {
    display: inline-block;
    width: 0;
    height: 0;
    margin-left: 5px;
    vertical-align: middle;
    border-left: 3px solid transparent;
    border-right: 3px solid transparent;
    border-top: 3px solid #333;
}

.col-body {
    flex-direction: column;
    padding: 1px 0 0 7px;
}

.rline {
    height: 28px;
    line-height: 26px;
    white-space: nowrap;
}

.short-rows {
    padding: 0 0 0 8px;
}

.short-rows .rline {
    height: 26px;
}

.fmt-row {
    display: flex;
    align-items: center;
    color: #8da6c0;
}

.fmt-sym {
    font-family: "Open Sans", sans-serif;
    font-size: 21px;
    line-height: 30px;
}

.fmt-dollar { margin-left: 4px; }
.fmt-pct { margin-left: 8px; }
.fmt-comma { margin-left: 11px; font-weight: bold; color: #6f8aa8; }

.fmt-dec {
    margin-left: 20px;
    font-size: 11px;
    width: 19px;
    color: #a0b2c4;
}

.fmt-box {
    width: 66px;
    height: 31px;
    padding: 0 5px 0 4px;
    display: flex;
    justify-content: space-between;
    align-items: center;
    background-color: #e8e8e8;
    border: 1px solid #d0d0d0;
    color: #8e8e8e;
}

.lang-line {
    display: flex;
    align-items: center;
    gap: 2px;
}

/* main area */
.main {
    flex: 1;
    display: flex;
    min-height: 0;
}

.work {
    width: 1426px;
    display: flex;
    flex-direction: column;
}

.work-top {
    flex: 1;
    display: flex;
    min-height: 0;
}

.canvas-wrap {
    width: 1176px;
    padding-left: 5px;
    background-color: #f3f3f3;
}

.canvas {
    position: relative;
    width: 1170px;
    height: 100%;
    background-color: #fff;
    border-left: 1px solid #dcdcdc;
}

.page-line {
    position: absolute;
    left: 0;
    width: 1168px;
    border-top: 2px dotted #666;
}

.page-line-top { top: 57px; }
.page-line-bottom { top: 715px; }

/* canvas items, page coordinates minus 6,185 */
.logo {
    position: absolute;
    left: 96px;
    top: 118px;
    width: 272px;
}

.logo-top {
    position: relative;
    height: 38px;
    display: flex;
    align-items: center;
}

.logo-dot {
    position: absolute;
    left: 2px;
    top: 2px;
    width: 11px;
    height: 10px;
    background-color: #e8963a;
}

.logo-en {
    font-family: "Liberation Sans", sans-serif;
    font-size: 46px;
    font-weight: bold;
    font-style: italic;
    color: #2f6d74;
    -webkit-text-stroke: 1.5px #2f6d74;
    letter-spacing: 1px;
    line-height: 38px;
}

.logo-cn {
    margin-left: 5px;
    font-size: 36px;
    font-weight: 900;
    letter-spacing: 4px;
    color: #222;
    line-height: 38px;
}

.logo-slogan {
    margin-top: 3px;
    display: flex;
    align-items: center;
    gap: 7px;
}

.logo-slogan i {
    flex: 1;
    border-top: 1px solid #666;
}

.logo-slogan span {
    font-size: 13px;
    font-weight: 900;
    letter-spacing: 11px;
    margin-right: -11px;
    line-height: 14px;
    color: #333;
}

.slicer {
    position: absolute;
    left: 436px;
    top: 106px;
    width: 686px;
    height: 74px;
    border: 1px solid #666;
    padding: 7px 22px 4px 24px;
    display: flex;
    gap: 2px;
}

.year {
    flex: 1;
    background-color: #e8e8e8;
    color: #666;
    font-family: "Open Sans", sans-serif;
    font-size: 18px;
    display: flex;
    justify-content: center;
    align-items: center;
}

.kpi {
    position: absolute;
    left: 67px;
    width: 214px;
    text-align: center;
    background-color: #fff;
}

.kpi-1 {
    top: 209px;
    height: 159px;
    padding-top: 46px;
    border: 1px solid #555;
}

.kpi-2 {
    top: 368px;
    height: 158px;
    padding-top: 46px;
    border-left: 1px solid #ddd;
    border-right: 1px solid #ddd;
}

.kpi-3 {
    top: 526px;
    height: 159px;
    padding-top: 46px;
    border: 2px solid #aaa;
}

.kpi-value {
    height: 47px;
    line-height: 47px;
    color: #111;
    white-space: nowrap;
}

.num {
    font-family: Roboto, sans-serif;
    font-size: 28px;
    letter-spacing: -.3px;
}

.unit {
    margin-left: 3px;
    font-size: 34px;
    font-weight: 300;
}

.kpi-label {
    font-size: 14.7px;
    line-height: 20px;
    color: #b4b4b4;
    white-space: nowrap;
}

.kpi-tools {
    position: absolute;
    right: 7px;
    bottom: 3px;
    display: flex;
    align-items: center;
    gap: 16px;
    color: #666;
    font-size: 14px;
}

.kpi-funnel {
    color: #888;
}

.h {
    position: absolute;
    background-color: #8a8a8a;
}

.h-tl, .h-tr, .h-bl, .h-br {
    width: 9px;
    height: 9px;
    background: none;
    border: 0 solid #8a8a8a;
}

.h-tl { left: -2px; top: -2px; border-width: 3px 0 0 3px; }
.h-tr { right: -2px; top: -2px; border-width: 3px 3px 0 0; }
.h-bl { left: -2px; bottom: -2px; border-width: 0 0 3px 3px; }
.h-br { right: -2px; bottom: -2px; border-width: 0 3px 3px 0; }

.h-tm { left: 97px; top: -2px; width: 15px; height: 4px; }
.h-bm { left: 97px; bottom: -2px; width: 15px; height: 4px; }
.h-lm { left: -2px; top: 72px; width: 4px; height: 14px; }
.h-rm { right: -2px; top: 72px; width: 4px; height: 14px; }

.vis {
    position: absolute;
    background-color: #fff;
    border: 1px solid #555;
}

.vis-a { left: 281px; top: 209px; width: 281px; height: 239px; }
.vis-b { left: 562px; top: 209px; width: 281px; height: 239px; }
.vis-c { left: 843px; top: 209px; width: 281px; height: 239px; }
.vis-d { left: 281px; top: 448px; width: 423px; height: 238px; }
.vis-e { left: 704px; top: 448px; width: 420px; height: 238px; }

.vis-head {
    height: 15px;
    padding-left: 4px;
    background-color: #e6e6e6;
    color: #333;
    font-size: 11px;
    line-height: 14px;
    white-space: nowrap;
}

.vis-head.dark {
    background-color: #c8c8c8;
}

.vis-svg {
    display: block;
}

.leader {
    fill: none;
    stroke: #bbb;
    stroke-width: 1;
}

.lbl {
    font-size: 11px;
    fill: #8a8a8a;
}

.lbl-num {
    font-family: Roboto, sans-serif;
    font-size: 9.5px;
    fill: #8a8a8a;
}

.end {
    text-anchor: end;
}

.lbl-in {
    font-size: 11px;
    fill: #fff;
    text-anchor: middle;
}

.num-in {
    font-family: Roboto, sans-serif;
    font-size: 9px;
    font-weight: bold;
}

.axis-y {
    font-size: 10.5px;
    fill: #8a8a8a;
    letter-spacing: -.3px;
}

.axis-x {
    font-family: Roboto, sans-serif;
    font-size: 9.5px;
    fill: #8a8a8a;
    text-anchor: middle;
}

.legend {
    height: 29px;
    padding: 7px 0 0 5px;
    display: flex;
    gap: 4px;
    align-items: center;
    font-size: 10px;
    color: #777;
    white-space: nowrap;
}

.leg {
    display: flex;
    align-items: center;
    gap: 1px;
}

.dot {
    width: 8px;
    height: 8px;
    border-radius: 50%;
    margin-right: 1px;
}

.dot-y { background-color: #efc03d; }
.dot-g { background-color: #6fac5e; }
.dot-b { background-color: #47598b; }

.treemap {
    height: 188px;
    margin: 0 3px 0 5px;
    display: flex;
    gap: 1px;
}

.cell {
    padding: 2px 4px 1px;
    display: flex;
    flex-direction: column;
    justify-content: space-between;
    color: #fff;
    font-size: 11.5px;
    line-height: 16px;
}

.cell-num {
    font-size: 10.5px;
    letter-spacing: -.3px;
}

.cell-y {
    width: 204px;
    background-color: #efc03d;
}

.tree-right {
    flex: 1;
    display: flex;
    flex-direction: column;
    gap: 2px;
}

.cell-g {
    height: 104px;
    background-color: #6fac5e;
}

.cell-b {
    flex: 1;
    background-color: #47598b;
}

.cursor {
    position: absolute;
    left: 232px;
    top: 474px;
}

/* filter pane */
.filter-pane {
    width: 250px;
    padding: 15px 15px 0 10px;
    background-color: #fff;
    border-left: 1px solid #dcdcdc;
    border-right: 1px solid #dcdcdc;
}

.filter-head {
    height: 25px;
    display: flex;
    align-items: center;
    margin-right: -1px;
}

.filter-funnel {
    margin: 0 9px 0 3px;
    color: #333;
}

.pane-title {
    font-size: 19.5px;
    font-weight: bold;
    line-height: 25px;
    color: #333;
}

.eye {
    margin-left: auto;
    margin-right: 23px;
}

.filter-label {
    height: 19px;
    margin-top: 33px;
    display: flex;
    justify-content: space-between;
    line-height: 19px;
    font-size: 14.8px;
    color: #333;
}

.filter-label.first {
    margin-top: 19px;
}

.filter-label b {
    font-weight: normal;
    font-size: 14px;
    color: #666;
    padding-right: 4px;
    line-height: 14px;
}

.filter-card {
    height: 62px;
    margin-top: 6px;
    padding: 3px 9px;
    background-color: #fff;
    border: 1px solid #ccc;
    border-radius: 2px;
    font-size: 14.8px;
    line-height: 27px;
}

.filter-drop {
    height: 58px;
    margin-top: 5px;
    background-color: #fff;
    border: 1px solid #ccc;
    border-radius: 2px;
    font-size: 14.8px;
    display: flex;
    justify-content: center;
    align-items: center;
}

.filter-drop.tall {
    margin-top: 7px;
}

/* sheet tabs */
.sheet-tabs {
    height: 43px;
    flex: none;
    display: flex;
    background-color: #e9e9e9;
}

.sheet-nav {
    width: 58px;
    padding: 0 10px;
    display: flex;
    justify-content: space-between;
    align-items: center;
    border-right: 1px solid #dcdcdc;
}

.sheet {
    display: flex;
    justify-content: center;
    align-items: center;
    color: #555;
    font-size: 15px;
    border-right: 1px solid #d8d8d8;
}

.sheet-1 { width: 149px; }
.sheet-2 { width: 127px; }
.sheet-3 { width: 156px; }

.sheet.active {
    background-color: #fff;
    border-right: none;
    border-bottom: 2px solid #f2b90f;
}

.sheet-add {
    width: 50px;
    background-color: #f2b90f;
    color: #666;
    font-family: "Liberation Sans", sans-serif;
    font-size: 26px;
    font-weight: bold;
    text-align: center;
    line-height: 46px;
}

/* visualisations pane */
.viz-pane {
    width: 226px;
    background-color: #f2f0ef;
    border-right: 1px solid #dcdcdc;
    display: flex;
    flex-direction: column;
}

.side-head {
    height: 63px;
    flex: none;
    padding: 17px 16px 0 14px;
    display: flex;
    justify-content: space-between;
    align-items: flex-start;
}

.side-head .pane-chev {
    margin-top: 6px;
}

.pane-chev {
    flex: none;
}

.viz-grid {
    height: 183px;
    flex: none;
    padding-left: 4px;
    display: grid;
    grid-template-columns: repeat(6, 35px);
    grid-auto-rows: 29.6px;
    align-items: center;
    justify-items: center;
    border-bottom: 1px solid #dcdcdc;
}

.vi {
    width: 22px;
    height: 24px;
}

.vi-card {
    width: 25px;
    height: 27px;
    background-color: #d9d9d9;
    border: 2px solid #666;
    color: #fff;
    font-family: Roboto, sans-serif;
    font-size: 11px;
    text-align: center;
    line-height: 17px;
    position: relative;
}

.vi-card i {
    position: absolute;
    left: 3px;
    right: 3px;
    bottom: 4px;
    border-top: 1px solid #777;
}

.vi-text {
    font-family: "Liberation Sans", sans-serif;
    font-size: 20px;
    font-weight: bold;
    color: #7fa7d1;
    line-height: 24px;
}

.vi-r {
    font-size: 25px;
    color: #6f9ccb;
}

.vi-more {
    font-size: 16px;
    color: #444;
}

.viz-tabs {
    height: 44px;
    flex: none;
    padding-left: 15px;
    display: flex;
}

.viz-tab {
    width: 49px;
    padding-top: 9px;
    margin-right: 1px;
    text-align: center;
}

.viz-tab.on {
    border-bottom: 4px solid #f2b90f;
    border-radius: 2px;
}

.viz-tab svg {
    display: inline-block;
}

.viz-body {
    padding: 0 9px 0 6px;
}

.viz-label {
    line-height: 20px;
    color: #444;
    font-size: 14.5px;
    padding-left: 5px;
}

.well-label {
    margin-top: 7px;
    padding-left: 8px;
}

.well {
    height: 36px;
    margin-top: 7px;
    padding: 3px;
    border: 1px dashed #ccc;
}

.well-pill {
    height: 28px;
    padding: 0 3px 0 5px;
    display: flex;
    align-items: center;
    gap: 5px;
    background-color: #e7e7e7;
    border: 1px solid #d0d0d0;
    border-radius: 2px;
    font-size: 14.8px;
    color: #333;
}

.well-pill span {
    flex: 1;
}

.drill-title {
    margin-top: 18px;
    padding-left: 11px;
}

.cross-label {
    margin-top: 19px;
}

.toggle-row {
    height: 20px;
    margin-top: 17px;
    padding-left: 10px;
    display: flex;
    align-items: center;
    color: #555;
}

.toggle-row span {
    margin-right: 12px;
}

.toggle-line {
    width: 24px;
    border-top: 2px solid #555;
}

.knob-off {
    width: 14px;
    height: 14px;
    border: 3px solid #666;
    border-radius: 50%;
    background-color: #f2f0ef;
}

.knob-on {
    width: 14px;
    height: 14px;
    border-radius: 50%;
    background-color: #555;
}

.keep-label {
    margin-top: 23px;
}

.drill-drop {
    height: 33px;
    margin-top: 17px;
    padding-left: 10px;
    background-color: #fff;
    border: 1px dashed #ccc;
    line-height: 31px;
    font-size: 14.8px;
    color: #444;
}

/* fields pane */
.fields-pane {
    flex: 1;
    min-width: 0;
    overflow: hidden;
    background-color: #f2f0ef;
    display: flex;
    flex-direction: column;
}

.search {
    height: 37px;
    margin: 2px 0 0 5px;
    padding-left: 13px;
    flex: none;
    display: flex;
    align-items: center;
    gap: 8px;
    background-color: #fff;
    border: 1px solid #ddd;
    border-right: none;
    border-radius: 2px 0 0 2px;
    font-size: 14.8px;
}

.tree {
    flex: none;
    margin-top: 6px;
    padding-top: 10px;
    border-top: 1px solid #dcdcdc;
    font-size: 14.8px;
}

.t-row {
    height: 34px;
    padding-left: 5px;
    display: flex;
    align-items: center;
    white-space: nowrap;
}

.t-icon {
    margin-left: 9px;
    flex: none;
}

.t-row > span:last-child {
    margin-left: 15px;
}

.t-badge {
    position: relative;
    display: flex;
}

.badge {
    position: absolute;
    left: 17px;
    top: 7px;
}

.t-strong {
    font-weight: 500;
}

.t-fields {
    padding: 6px 0 3px;
}

.f-row {
    height: 30px;
    padding-left: 40px;
    display: flex;
    align-items: center;
    white-space: nowrap;
}

.cb {
    width: 15px;
    height: 15px;
    flex: none;
    background-color: #fff;
    border: 1px solid #ccc;
    border-radius: 2px;
}

.cb-on {
    flex: none;
}

.f-type {
    width: 12px;
    height: 14px;
    margin: 0 13px 0 7px;
    flex: none;
    display: block;
}

.f-sigma {
    font-size: 16px;
    font-weight: bold;
    line-height: 14px;
    font-family: "Liberation Serif", serif;
}

/* status bar */
.statusbar {
    height: 24px;
    flex: none;
    padding-left: 2px;
    background-color: #f2f1f0;
    color: #444;
    font-size: 13.5px;
    line-height: 26px;
    text-indent: -12px;
}
```
